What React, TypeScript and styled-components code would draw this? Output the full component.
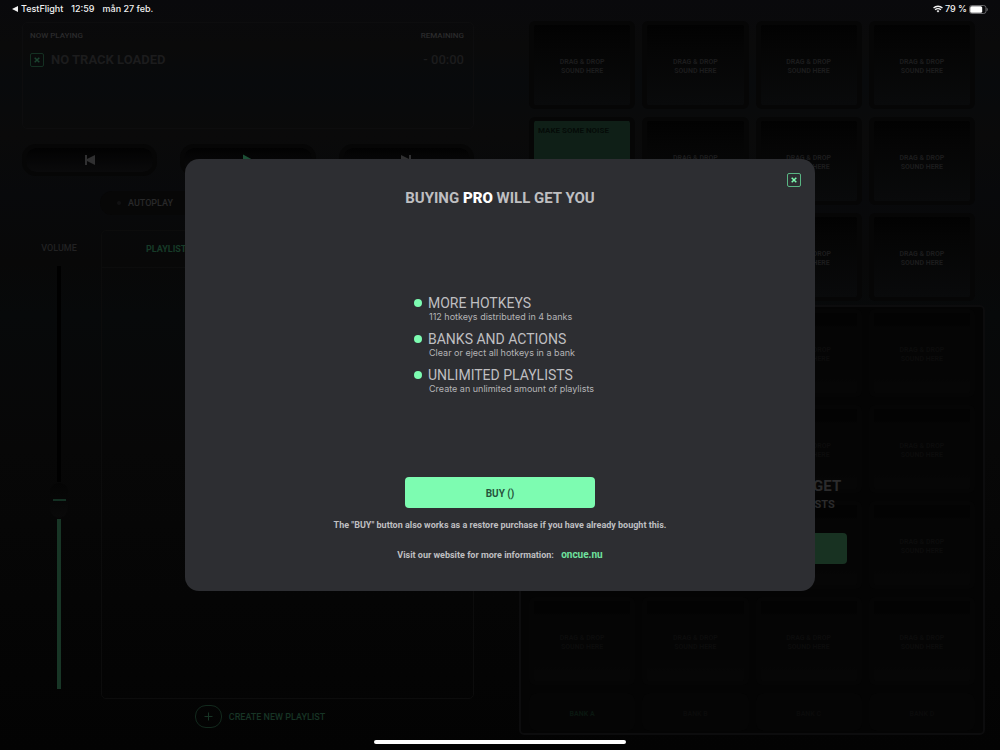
import React, { useState } from "react";
import styled, { createGlobalStyle, css } from "styled-components";

const GlobalStyle = createGlobalStyle`
  *, *::before, *::after { box-sizing: border-box; }
  html { background: #040404; }
  body {
    margin: 0;
    min-height: 100vh;
    font-family: Roboto, "Liberation Sans", sans-serif;
    background: linear-gradient(#09090c 0%, #0a0a0a 6%, #080a0c 11%, #0a0a0a 18%, #08090b 26%, #080808 35%, #07090a 42%, #070707 60%, #040404 90%, #030303 100%);
  }
  button {
    font-family: inherit;
    margin: 0;
    padding: 0;
    border: 0;
    background: none;
    cursor: pointer;
  }
  h1, h2, p, ul { margin: 0; padding: 0; }
`;

const Screen = styled.div`
  display: flex;
  flex-direction: column;
  min-height: 100vh;
`;

const StatusBar = styled.header`
  display: flex;
  justify-content: space-between;
  align-items: center;
  height: 18px;
  padding: 0 12px;
  font: 500 9px/18px Inter, "Liberation Sans", sans-serif;
  color: #f2f2f2;
`;

const StatusGroup = styled.div<{ $gap: number }>`
  display: flex;
  align-items: center;
  gap: ${(p) => p.$gap}px;
`;

const BackLink = styled.a`
  display: flex;
  align-items: center;
  gap: 3px;
  color: inherit;
  text-decoration: none;
`;

const Workspace = styled.main`
  flex: 1;
  display: grid;
  grid-template-columns: 452fr 466fr;
  gap: 45px;
  padding: 3px 15px 15px 22px;
`;

const Deck = styled.section`
  display: flex;
  flex-direction: column;
  padding-top: 1px;
`;

const NowPlaying = styled.div`
  display: grid;
  grid-template-columns: 1fr auto;
  grid-auto-rows: 24px;
  align-items: center;
  height: 107px;
  padding: 1px 9px 0 7px;
  border: 1px solid #0d0d0e;
  border-radius: 5px;
`;

const Caption = styled.span`
  font-size: 8px;
  line-height: 12px;
  font-weight: 500;
  color: #2b2b2c;
`;

const TrackTitle = styled.div`
  display: flex;
  align-items: center;
  gap: 7px;
  font-size: 13px;
  line-height: 18px;
  font-weight: 700;
  color: #1c1c1d;
`;

const TimeLeft = styled.span`
  font-size: 13px;
  line-height: 18px;
  font-weight: 500;
  color: #1c1c1d;
  text-align: right;
`;

const CloseBox = styled.button<{ $dim?: boolean }>`
  display: flex;
  width: 14px;
  height: 14px;
  align-items: center;
  justify-content: center;
  border: 1px solid ${(p) => (p.$dim ? "#143022" : "#59b583")};
  border-radius: 2px;
  color: ${(p) => (p.$dim ? "#1c4430" : "#7dfcb1")};
`;

const Transport = styled.div`
  display: grid;
  grid-template-columns: repeat(3, 1fr);
  gap: 23px;
  margin-top: 15px;
`;

const TransportButton = styled.button<{ $green?: boolean }>`
  display: flex;
  height: 32px;
  align-items: center;
  justify-content: center;
  border: 4px solid #060606;
  border-radius: 14px;
  background: linear-gradient(#020202, #0a0a0b) padding-box;
  color: ${(p) => (p.$green ? "#1d5036" : "#303031")};
`;

const Toggles = styled.div`
  display: grid;
  grid-template-columns: 1fr 1fr;
  gap: 12px;
  margin: 15px 0 15px 78px;
`;

const Toggle = styled.button`
  display: flex;
  align-items: center;
  gap: 7px;
  height: 24px;
  padding-left: 17px;
  border-radius: 12px;
  background: #070707;
  color: #29292a;
  font-size: 9px;
  font-weight: 500;
`;

const Led = styled.span`
  width: 4px;
  height: 4px;
  border-radius: 2px;
  background: #111112;
`;

const Lower = styled.div`
  flex: 1;
  display: grid;
  grid-template-columns: 79px 1fr;
`;

const VolumeColumn = styled.label`
  display: flex;
  flex-direction: column;
  align-items: center;
  padding: 11px 5px 10px 0;
  gap: 11px;
  font-size: 9px;
  line-height: 14px;
  font-weight: 500;
  color: #222223;
`;

const thumb = css`
  width: 18px;
  height: 35px;
  border: 0;
  border-radius: 9px;
  background: linear-gradient(transparent 16px, #143023 16px, #143023 18px, transparent 18px) no-repeat center / 13px 100%, linear-gradient(#040404, #090909);
`;

const Slider = styled.input`
  appearance: none;
  writing-mode: vertical-lr;
  direction: rtl;
  flex: 1;
  width: 18px;
  min-height: 160px;
  margin: 0;
  border-radius: 2px;
  &::-webkit-slider-thumb { appearance: none; ${thumb} }
  &::-moz-range-thumb { ${thumb} }
`;

const PlaylistPanel = styled.div`
  border: 1px solid #0c0c0c;
  border-radius: 5px;
`;

const Tabs = styled.div`
  display: grid;
  grid-template-columns: 1fr 1fr;
  height: 37px;
  padding: 0 30px;
  border-bottom: 1px solid #0c0c0c;
`;

const Tab = styled.button<{ $active?: boolean }>`
  padding-left: 14px;
  text-align: left;
  font-size: 9px;
  font-weight: 700;
  color: ${(p) => (p.$active ? "#173b28" : "#222223")};
`;

const CreateButton = styled.button`
  display: flex;
  align-items: center;
  align-self: center;
  gap: 7px;
  margin: 6px 0 7px 24px;
  font-size: 9px;
  font-weight: 500;
  color: #173425;
`;

const PlusPill = styled.span`
  display: flex;
  width: 27px;
  height: 23px;
  align-items: center;
  justify-content: center;
  border: 1px solid #12291d;
  border-radius: 11px;
`;

const Hotkeys = styled.section`
  display: flex;
  flex-direction: column;
  gap: 4px;
`;

const PadGrid = styled.div<{ $inset: number }>`
  display: grid;
  grid-template-columns: repeat(4, 1fr);
  grid-area: 1 / 1;
  gap: 8px 7px;
  padding: 0 ${(p) => p.$inset}px;
`;

const Pad = styled.button<{ $kind: "open" | "loaded" | "locked" }>`
  height: 88px;
  padding-top: 3px;
  border: 4px solid #060606;
  border-width: 4px 5px;
  border-radius: 6px;
  font-size: 7px;
  line-height: 9px;
  font-weight: 700;
  color: #1c1c1d;
  background: linear-gradient(#020202, #050505 30%, #090a0b) padding-box;
  ${(p) =>
    p.$kind === "loaded" &&
    css`
      display: flex;
      align-items: flex-start;
      padding: 5px 4px;
      background: #0f1f17 padding-box;
      color: #050b08;
      font-size: 8px;
    `}
  ${(p) =>
    p.$kind === "locked" &&
    css`
      border-color: #050505;
      color: #0c0c0c;
      background: linear-gradient(#030303 12px, #050505 14px, #050505 66px, #060606 70px) padding-box;
    `}
`;

const LockedPanel = styled.div`
  display: grid;
  flex: 1;
  padding: 2px 8px;
  border: 2px solid #0c0c0d;
  border-radius: 5px;
  background: #040404;
`;

const BankButton = styled.button<{ $active?: boolean }>`
  height: 38px;
  padding-top: 3px;
  border-radius: 8px;
  background: #050505;
  font-size: 7px;
  font-weight: 700;
  color: ${(p) => (p.$active ? "#0a1710" : "#0b0b0b")};
`;

const Upsell = styled.div`
  grid-area: 1 / 1;
  z-index: 1;
  display: flex;
  flex-direction: column;
  align-items: center;
  justify-self: center;
  align-self: start;
  padding-top: 166px;
  color: #2b2b2c;
`;

const UpsellTitle = styled.h2`
  font-size: 15px;
  line-height: 22px;
  font-weight: 700;
`;

const UpsellText = styled.p`
  font-size: 11px;
  line-height: 16px;
  font-weight: 700;
`;

const BuyButton = styled.button<{ $dim?: boolean }>`
  width: 190px;
  height: 31px;
  padding-top: 2px;
  border-radius: 4px;
  background: ${(p) => (p.$dim ? "#183222" : "#7dfcb1")};
  color: ${(p) => (p.$dim ? "#0a130e" : "#26543c")};
  font-size: 10px;
  line-height: 14px;
  font-weight: 700;
  ${(p) => p.$dim && "margin-top: 20px;"}
`;

const Backdrop = styled.div`
  position: fixed;
  inset: 0;
  z-index: 2;
  display: flex;
  align-items: center;
  justify-content: center;
`;

const Dialog = styled.div`
  position: relative;
  display: flex;
  flex-direction: column;
  align-items: center;
  width: 63%;
  min-width: 360px;
  padding: 28px 20px 29px;
  border-radius: 14px;
  background: #2d2e32;
  color: #bfbfc1;
`;

const DialogClose = styled.div`
  position: absolute;
  top: 14px;
  right: 14px;
`;

const DialogTitle = styled.h1`
  font-size: 15px;
  line-height: 22px;
  font-weight: 700;
  strong { color: #fff; }
`;

const Features = styled.ul`
  display: flex;
  flex-direction: column;
  gap: 8px;
  width: 190px;
  margin: 85px 0 83px;
  padding-left: 9px;
  list-style: none;
`;

const Feature = styled.li`
  display: grid;
  grid-template-columns: 8px auto;
  column-gap: 6px;
  align-items: center;
  white-space: nowrap;
`;

const Dot = styled.span`
  width: 8px;
  height: 8px;
  border-radius: 4px;
  background: #7dfcb1;
`;

const FeatureTitle = styled.span`
  font-size: 14px;
  line-height: 18px;
`;

const FeatureText = styled.span`
  grid-column: 2;
  font: 400 9px/10px Inter, "Liberation Sans", sans-serif;
  padding-left: 1px;
  color: #b4b4b6;
`;

const Note = styled.p`
  margin-top: 10px;
  font-size: 9px;
  line-height: 14px;
  font-weight: 700;
  & + & { margin-top: 16px; }
`;

const SiteLink = styled.a`
  margin-left: 5px;
  color: #70e29f;
  font-size: 10px;
  font-weight: 700;
  text-decoration: none;
`;

const HomeIndicator = styled.div`
  position: fixed;
  z-index: 3;
  bottom: 6px;
  left: 50%;
  width: 252px;
  height: 4px;
  border-radius: 2px;
  background: #fff;
  transform: translateX(-50%);
`;

const CrossIcon = () => (
  <svg width="6" height="6" viewBox="0 0 6 6" stroke="currentColor" strokeWidth="1.5" aria-hidden="true">
    <path d="M.7.7 5.3 5.3M5.3.7.7 5.3" />
  </svg>
);

const SkipIcon = ({ forward = false }: { forward?: boolean }) => (
  <svg width="10" height="10" viewBox="0 0 10 10" fill="currentColor" aria-hidden="true">
    {forward ? <path d="M0 0 8 4V0H10V10H8V6L0 10Z" /> : <path d="M0 0H2V4L10 0V10L2 6V10H0Z" />}
  </svg>
);

const PlayIcon = () => (
  <svg width="10" height="12" viewBox="0 0 10 12" fill="currentColor" aria-hidden="true">
    <path d="M0 .5 10 6 0 11.5Z" />
  </svg>
);

const WifiIcon = () => (
  <svg width="10" height="8" viewBox="0 0 11 8" fill="none" stroke="currentColor" strokeWidth="1.5" aria-hidden="true">
    <path d="M.6 3A7 7 0 0 1 10.4 3M2.3 4.9A4.6 4.6 0 0 1 8.7 4.9" />
    <path d="M3.9 6.2A2.3 2.3 0 0 1 7.1 6.2L5.5 7.9Z" fill="currentColor" stroke="none" />
  </svg>
);

const BatteryIcon = () => (
  <svg width="19" height="9" viewBox="0 0 19 9" aria-hidden="true">
    <rect x=".5" y=".5" width="16.5" height="8" rx="2.3" fill="none" stroke="#68686b" />
    <rect x="1.2" y="1.2" width="12" height="6.6" rx="1.5" fill="#fff" />
    <path d="M18 3.2Q19 4.5 18 5.8Z" fill="#68686b" stroke="#68686b" strokeWidth=".6" />
  </svg>
);

const EmptyPad = ({ locked = false }: { locked?: boolean }) => (
  <Pad $kind={locked ? "locked" : "open"}>
    DRAG &amp; DROP
    <br />
    SOUND HERE
  </Pad>
);

export default function App() {
  const [volume, setVolume] = useState(44);
  const level = `calc(17px + (100% - 35px) * ${1 - volume / 100})`;

  return (
    <>
      <GlobalStyle />
      <Screen>
        <StatusBar>
          <StatusGroup $gap={8}>
            <BackLink href="#testflight">
              <svg width="6" height="6" viewBox="0 0 6 6" fill="currentColor" aria-hidden="true">
                <path d="M0 3 6 0V6Z" />
              </svg>
              TestFlight
            </BackLink>
            <span>12:59</span>
            <span>mån 27 feb.</span>
          </StatusGroup>
          <StatusGroup $gap={2}>
            <WifiIcon />
            <span>79 %</span>
            <BatteryIcon />
          </StatusGroup>
        </StatusBar>
        <Workspace>
          <Deck>
            <NowPlaying>
              <Caption>NOW PLAYING</Caption>
              <Caption>REMAINING</Caption>
              <TrackTitle>
                <CloseBox $dim aria-label="Eject track">
                  <CrossIcon />
                </CloseBox>
                NO TRACK LOADED
              </TrackTitle>
              <TimeLeft>- 00:00</TimeLeft>
            </NowPlaying>
            <Transport>
              <TransportButton aria-label="Previous">
                <SkipIcon />
              </TransportButton>
              <TransportButton $green aria-label="Play">
                <PlayIcon />
              </TransportButton>
              <TransportButton aria-label="Next">
                <SkipIcon forward />
              </TransportButton>
            </Transport>
            <Toggles>
              <Toggle>
                <Led />
                AUTOPLAY
              </Toggle>
              <Toggle aria-label="Loop">
                <Led />
              </Toggle>
            </Toggles>
            <Lower>
              <VolumeColumn>
                VOLUME
                <Slider
                  type="range"
                  value={volume}
                  onChange={(e) => setVolume(Number(e.target.value))}
                  style={{
                    background: `linear-gradient(#000 calc(${level} - 18px), transparent 0, transparent calc(${level} + 19px), #183626 0) no-repeat center / 4px 100%`,
                  }}
                />
              </VolumeColumn>
              <PlaylistPanel>
                <Tabs>
                  <Tab $active>PLAYLISTS</Tab>
                </Tabs>
              </PlaylistPanel>
            </Lower>
            <CreateButton>
              <PlusPill>
                <svg width="9" height="9" viewBox="0 0 9 9" stroke="currentColor" strokeWidth="1" aria-hidden="true">
                  <path d="M4.5 .5V8.5M.5 4.5H8.5" />
                </svg>
              </PlusPill>
              CREATE NEW PLAYLIST
            </CreateButton>
          </Deck>
          <Hotkeys>
            <PadGrid $inset={10}>
              {Array.from({ length: 12 }, (_, i) =>
                i === 4 ? (
                  <Pad key={i} $kind="loaded">
                    MAKE SOME NOISE
                  </Pad>
                ) : (
                  <EmptyPad key={i} />
                )
              )}
            </PadGrid>
            <LockedPanel>
              <PadGrid $inset={0}>
                {Array.from({ length: 16 }, (_, i) => (
                  <EmptyPad key={i} locked />
                ))}
                {["A", "B", "C", "D"].map((bank) => (
                  <BankButton key={bank} $active={bank === "A"}>
                    BANK {bank}
                  </BankButton>
                ))}
              </PadGrid>
              <Upsell>
                <UpsellTitle>UPGRADE TO PRO TO GET</UpsellTitle>
                <UpsellText>MORE HOTKEYS AND PLAYLISTS</UpsellText>
                <BuyButton $dim aria-label="Buy pro" />
              </Upsell>
            </LockedPanel>
          </Hotkeys>
        </Workspace>
      </Screen>
      <Backdrop>
        <Dialog role="dialog" aria-modal="true" aria-labelledby="pro-title">
          <DialogClose>
            <CloseBox aria-label="Close">
              <CrossIcon />
            </CloseBox>
          </DialogClose>
          <DialogTitle id="pro-title">
            BUYING <strong>PRO</strong> WILL GET YOU
          </DialogTitle>
          <Features>
            <Feature>
              <Dot />
              <FeatureTitle>MORE HOTKEYS</FeatureTitle>
              <FeatureText>112 hotkeys distributed in 4 banks</FeatureText>
            </Feature>
            <Feature>
              <Dot />
              <FeatureTitle>BANKS AND ACTIONS</FeatureTitle>
              <FeatureText>Clear or eject all hotkeys in a bank</FeatureText>
            </Feature>
            <Feature>
              <Dot />
              <FeatureTitle>UNLIMITED PLAYLISTS</FeatureTitle>
              <FeatureText>Create an unlimited amount of playlists</FeatureText>
            </Feature>
          </Features>
          <BuyButton>BUY ()</BuyButton>
          <Note>The "BUY" button also works as a restore purchase if you have already bought this.</Note>
          <Note>
            Visit our website for more information: <SiteLink href="#oncue.nu">oncue.nu</SiteLink>
          </Note>
        </Dialog>
      </Backdrop>
      <HomeIndicator />
    </>
  );
}
